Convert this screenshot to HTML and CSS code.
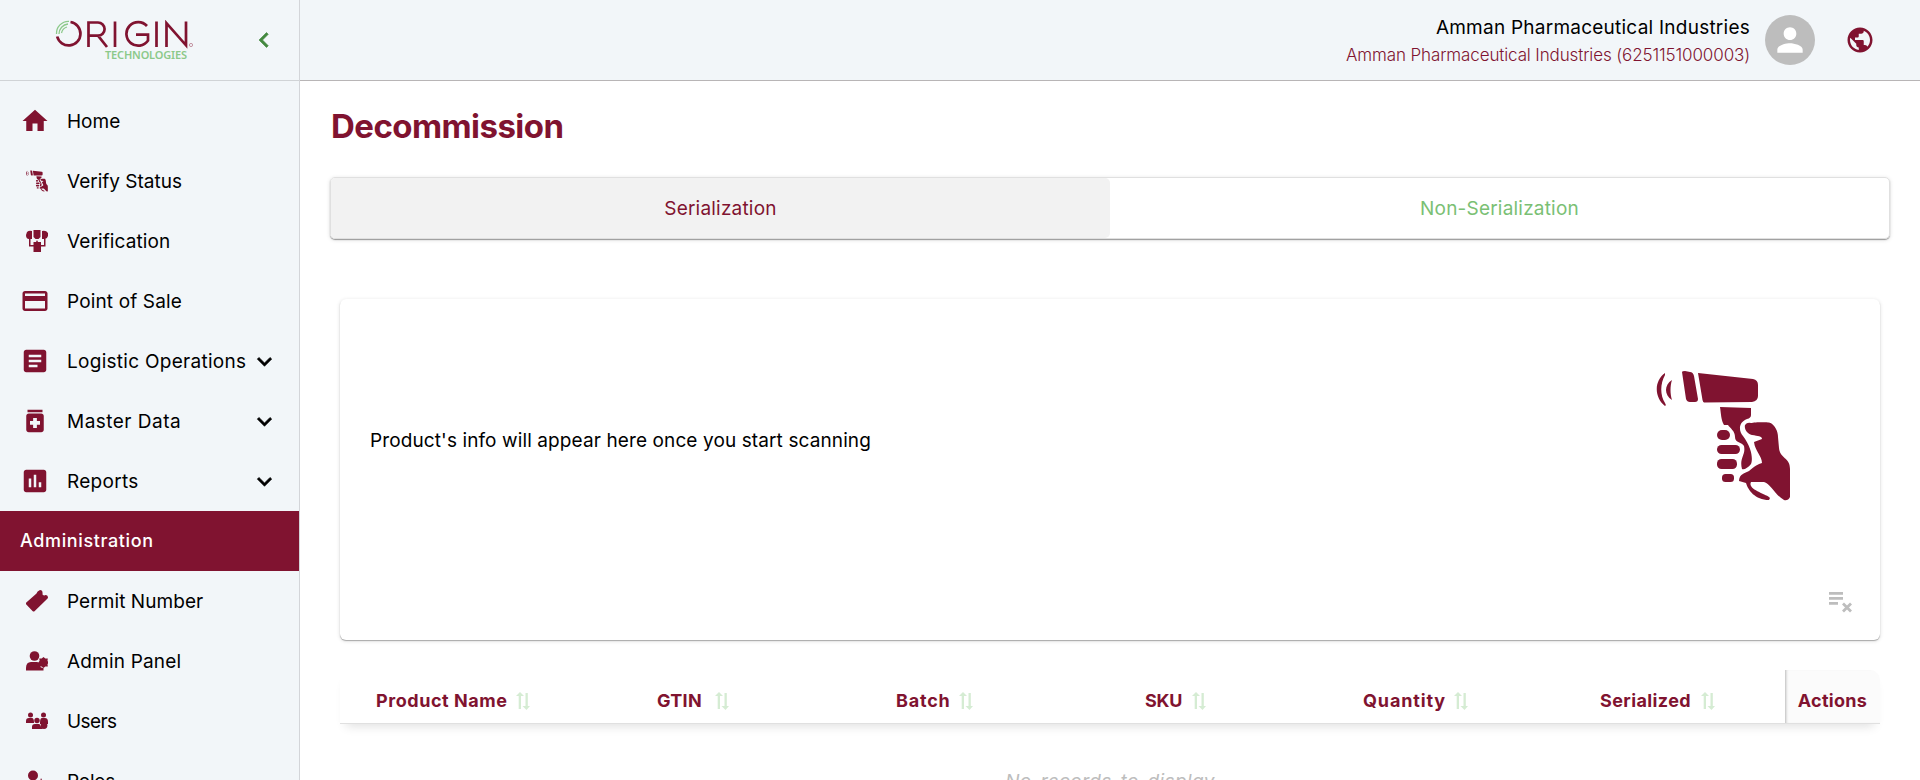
FILE: index.html
```html
<!DOCTYPE html>
<html lang="en">
<head>
<meta charset="utf-8">
<title>Decommission</title>
<link rel="stylesheet" href="styles.css">
</head>
<body>
<svg width="0" height="0" class="defs">
  <symbol id="scanner" viewBox="0 0 135 130">
    <path d="M9 2C-2 10-2 26 9 35C10 34 10 34 9 32C4 24 4 13 9 4ZM16 9C8 14 8 24 16 29C14 23 14 15 16 9ZM26 1Q26 0 29 0L34 1Q37 1 38 5L42 28Q42 31 39 31H34Q31 31 30 28ZM42 2L97 8Q102 9 102 14V25Q102 30 96 31L48 31.500Q47 31 46.500 29ZM64 36L95 37V44Q95 47 91 48C83 51 82 59 87 65C96 77 97 88 95 93C92 97 88 99 86 98C83 87 90 84 88 75C86 71 79 72 79 66C79 60 74 57 72 54H68C65 49 65 42 64 36ZM95 52C98 51 111 51 113 51.500C119 53 122 61 122 66L123 77C124 88 134 86 134 98V126Q132 130 128 129C119 124 114 112 108 111H95C91 119 111 123 114 127L113 129C99 129 92 119 90 112L83 110C83 103 89 102 93 100C99 95 102 93 106 92C106 85 99 80 98 71L106 68C106 65 102 65 96 64C91 63 88 58 89 54Q91 51 95 52Z"/>
    <rect x="61" y="59" width="13" height="10" rx="5"/><rect x="61" y="74" width="23" height="9" rx="4.500"/><rect x="61" y="88" width="20" height="10" rx="4.500"/><rect x="66" y="103" width="12" height="8" rx="3.500"/>
  </symbol>
  <symbol id="down" viewBox="0 0 24 24"><path d="M7.410 8.590 12 13.170l4.590-4.580L18 10l-6 6-6-6z"/></symbol>
  <symbol id="sort" viewBox="0 0 14 18"><path d="M2.700 17V4H0L4 0l4 4H5v13zM9.500 1v13H6.500L10.500 18l3.500-4h-2.200V1z"/></symbol>
</svg>
<div class="app">
  <aside class="sidebar">
    <div class="brand">
      <svg class="logo" viewBox="0 0 140 42" width="140" height="42">
        <g fill="none" stroke="#801330" stroke-width="2.700">
          <path d="M15.500 2A11.800 11.800 0 1 1 2.200 16.500"/>
          <path d="M33.500 27V2.500h9.500a6.600 6.600 0 0 1 0 13.200h-9.500M43 15.700 52 27M60 1.500V27M92 6A11.800 11.800 0 1 0 93 20.500V14.700H81M101.500 1.500V27M111.500 27V3.200L131 25.300V1.500"/>
        </g>
        <g fill="none" stroke="#8cc98a" stroke-width="1.300"><path d="M1.500 14A12 12 0 0 1 14 1.300M4 14A10 10 0 0 1 13 4M6.500 13A8 8 0 0 1 12 7"/></g>
        <text class="tech" x="50" y="38.500" textLength="82">TECHNOLOGIES</text>
        <circle cx="136" cy="25" r="1.600" fill="none" stroke="#b77a8b" stroke-width=".8"/>
      </svg>
      <svg class="collapse" viewBox="0 0 24 24"><path d="M15.410 7.410 14 6l-6 6 6 6 1.410-1.410L10.830 12z"/></svg>
    </div>
    <nav class="nav">
      <a class="item"><svg class="ico" viewBox="0 0 24 24"><path d="M10 20v-6h4v6h5v-8h3L12 3 2 12h3v8z"/></svg><span class="w-home">Home</span></a>
      <a class="item"><svg class="ico small"><use href="#scanner"/></svg><span class="w-verify">Verify Status</span></a>
      <a class="item"><svg class="ico small" viewBox="0 0 22 22"><path d="M1 2Q3 0 6 1V9H3Q0 9 0 5ZM7.500 0H14.500V7L12.500 9H9.500L7.500 7ZM16 1Q20 0 22 3V6Q21 9 19 9H16ZM7.500 12H10L11 10L12 12H15V22H7.500ZM3 9H4.500V15H8V16.500H3ZM18 9H19.500V16.500H15V15H18Z"/></svg><span class="w-verification">Verification</span></a>
      <a class="item"><svg class="ico" viewBox="0 0 24 24"><path d="M20 4H4c-1.110 0-1.990.890-1.990 2L2 18c0 1.110.890 2 2 2h16c1.110 0 2-.890 2-2V6c0-1.110-.890-2-2-2zm0 14H4v-6h16v6zm0-10H4V6h16v2z"/></svg><span class="w-pos">Point of Sale</span></a>
      <a class="item"><svg class="ico" viewBox="0 0 24 24"><path d="M19 3H5c-1.100 0-2 .9-2 2v14c0 1.100.9 2 2 2h14c1.100 0 2-.9 2-2V5c0-1.100-.9-2-2-2zm-5 14H7v-2h7v2zm3-4H7v-2h10v2zm0-4H7V7h10v2z"/></svg><span class="w-log">Logistic Operations</span><svg class="chev"><use href="#down"/></svg></a>
      <a class="item"><svg class="ico" viewBox="0 0 24 24"><path d="M6 3h12v2H6zm11 3H7c-1.100 0-2 .9-2 2v11c0 1.100.9 2 2 2h10c1.100 0 2-.9 2-2V8c0-1.100-.9-2-2-2zm-1 9h-2.500v2.500h-3V15H8v-3h2.500V9.500h3V12H16z"/></svg><span class="w-master">Master Data</span><svg class="chev"><use href="#down"/></svg></a>
      <a class="item"><svg class="ico" viewBox="0 0 24 24"><path d="M19 3H5c-1.100 0-2 .9-2 2v14c0 1.100.9 2 2 2h14c1.100 0 2-.9 2-2V5c0-1.100-.9-2-2-2zM9 17H7v-7h2v7zm4 0h-2V7h2v10zm4 0h-2v-4h2v4z"/></svg><span class="w-reports">Reports</span><svg class="chev"><use href="#down"/></svg></a>
      <div class="section"><span class="w-administration">Administration</span></div>
      <a class="item"><svg class="ico small" viewBox="0 0 22 22"><path d="M.3 12.500 10.500 3.500Q11 1 14 0Q17 0 16.500 4.500Q18 6 19.500 5Q22 5 22 8L19 11L8.500 21.300Q7.500 22 6.500 21L.3 14.500Q-.5 13.500.3 12.500Z"/></svg><span class="w-permit">Permit Number</span></a>
      <a class="item"><svg class="ico small" viewBox="0 0 22 22"><circle cx="8.500" cy="6" r="4.800"/><path d="M0 20.500V18Q0 12 5 12H11Q13 12 14 14Q13 18 17.500 18V20.500ZM17.500 7 19.300 8.500 21.800 8.500 21.500 10.800 22.500 12.500 21.500 14.300 21.800 16.500 19.300 16.500 17.500 18 15.700 16.500 13.300 16.500 13.600 14.300 12.500 12.500 13.600 10.800 13.300 8.500 15.700 8.500Z"/></svg><span class="w-admin">Admin Panel</span></a>
      <a class="item"><svg class="ico small" viewBox="0 0 22 22"><circle cx="4.500" cy="5" r="2.500"/><circle cx="17.500" cy="5" r="2.500"/><circle cx="11" cy="10.500" r="2.700"/><path d="M0 13V11Q0 8 3 8H6Q8 8 8 13ZM14 13Q14 8 16 8H19Q22 8 22 12V14H14ZM6 19V17Q6 14 9 14H13Q14 14 14.500 16L17 19Z"/><circle cx="18" cy="15.500" r="3.400"/></svg><span class="w-users">Users</span></a>
      <a class="item"><svg class="ico small" viewBox="0 0 22 22"><circle cx="7" cy="5.500" r="5"/><path d="M0 22Q0 12 7 12Q11 12 13 15L15 8L19 16V22Z"/></svg><span class="w-roles">Roles</span></a>
    </nav>
  </aside>
  <div class="page">
    <header class="topbar">
      <div class="account"><div class="name"><span>Amman Pharmaceutical Industries</span></div><div class="org"><span>Amman Pharmaceutical Industries (6251151000003)</span></div></div>
      <div class="avatar"><svg viewBox="0 0 24 24"><path d="M12 12c2.210 0 4-1.790 4-4s-1.790-4-4-4-4 1.790-4 4 1.790 4 4 4zm0 2c-2.670 0-8 1.340-8 4v2h16v-2c0-2.660-5.330-4-8-4z"/></svg></div>
      <svg class="globe" viewBox="0 0 24 24"><path d="M12 2C6.480 2 2 6.480 2 12s4.480 10 10 10 10-4.480 10-10S17.520 2 12 2zm-1 17.930c-3.950-.490-7-3.850-7-7.930 0-.620.080-1.210.210-1.790L9 15v1c0 1.100.9 2 2 2v1.930zm6.900-2.540c-.260-.810-1-1.390-1.900-1.390h-1v-3c0-.550-.450-1-1-1H8v-2h2c.550 0 1-.450 1-1V7h2c1.100 0 2-.9 2-2v-.410c2.930 1.190 5 4.060 5 7.410 0 2.080-.8 3.970-2.100 5.390z"/></svg>
    </header>
    <main class="main">
      <h1 class="title"><span>Decommission</span></h1>
      <div class="tabs"><div class="tab active"><span>Serialization</span></div><div class="tab"><span class="non">Non-Serialization</span></div></div>
      <section class="card">
        <p class="hint"><span>Product's info will appear here once you start scanning</span></p>
        <div class="art"><svg class="gun" width="135" height="130"><use href="#scanner"/></svg>
          <svg class="clear" viewBox="0 0 24 21" width="24" height="21"><path d="M0 0H14V2.700H0ZM0 5H14V7.700H0ZM0 10H9V12.700H0Z"/><path d="M14 11.500 22 19.500M22 11.500 14 19.500" fill="none" stroke="#bdbdbd" stroke-width="2.800"/></svg></div>
      </section>
      <div class="table">
        <div class="thead">
          <div class="th c1"><span>Product Name</span><svg class="sort"><use href="#sort"/></svg></div>
          <div class="th c2"><span>GTIN</span><svg class="sort"><use href="#sort"/></svg></div>
          <div class="th c3"><span>Batch</span><svg class="sort"><use href="#sort"/></svg></div>
          <div class="th c4"><span>SKU</span><svg class="sort"><use href="#sort"/></svg></div>
          <div class="th c5"><span>Quantity</span><svg class="sort"><use href="#sort"/></svg></div>
          <div class="th c6"><span>Serialized</span><svg class="sort"><use href="#sort"/></svg></div>
          <div class="th actions"><span>Actions</span></div>
        </div>
        <div class="empty"><span>No records to display</span></div>
      </div>
    </main>
  </div>
</div>
</body>
</html>
```
FILE: styles.css
```css
*{box-sizing:border-box}
body{margin:0;height:780px;overflow:hidden;background:#fff;color:#000;font:19px/24px Inter,"Noto Sans",sans-serif}
.defs{display:block;width:0;height:0}
svg{display:block;flex:none}
span{white-space:nowrap}
.app{display:flex;height:780px;overflow:hidden}
.sidebar{width:300px;flex:none;background:#f2f6f9;border-right:1px solid #d3d5d9}
.brand{height:81px;display:flex;align-items:center;border-bottom:1px solid #d0d3d6;padding-left:55px}
.logo{margin-top:2px}
.tech{font:600 11px "Noto Sans",sans-serif;fill:#8cc98a}
.collapse{width:30px;height:30px;margin-left:54px;fill:#43883f;stroke:#43883f;stroke-width:.5}
.nav{padding-top:10px}
.item{display:flex;align-items:center;height:60px;padding-left:20px}
.ico{width:30px;height:30px;fill:#801330;margin-right:17px}
.ico.small{width:22px;height:22px;margin:0 19px 0 6px}
.item span{flex:1;padding-top:2px}
.w-verification{letter-spacing:.1px}
.w-pos{letter-spacing:.14px}
.w-log{letter-spacing:.28px}
.w-master{letter-spacing:.48px}
.w-reports{letter-spacing:.28px}
.w-administration{letter-spacing:.63px}
.w-permit{letter-spacing:.07px}
.w-admin{letter-spacing:.18px}
.w-users{letter-spacing:-.6px}
.w-roles{letter-spacing:-.2px}
.chev{width:29px;height:29px;margin-right:20px;stroke:#000;stroke-width:.5}
.section{height:60px;background:#801330;color:#fff;display:flex;align-items:center;padding-left:20px;font-weight:500;font-size:18px}
.page{flex:1;min-width:0}
.topbar{height:81px;background:#f2f6f9;border-bottom:1px solid #b8b5b6;display:flex;align-items:center;justify-content:flex-end;padding-right:45px}
.account{text-align:right;margin-right:15px;padding-top:3px}
.name{line-height:28px;letter-spacing:.24px}
.org{font-size:17px;font-weight:300;color:#801330;line-height:27px;letter-spacing:-.12px}
.avatar{width:50px;height:50px;border-radius:50%;background:#bdbdbd;display:flex;align-items:center;justify-content:center}
.avatar svg{width:38px;height:38px;fill:#fff}
.globe{width:30px;height:30px;fill:#801330;margin-left:30px}
.main{padding:24px 30px 0}
.title{margin:0;height:72px;padding-left:1px;font-size:33px;line-height:42px;font-weight:700;color:#801330;letter-spacing:-.55px}
.tabs{height:62px;display:flex;border:1px solid #e0e0e0;border-radius:5px;box-shadow:0 1px 1px #999,0 1px 4px #0002;overflow:hidden}
.tab{flex:1;display:flex;align-items:center;justify-content:center;color:#7ac074;letter-spacing:.2px;padding-top:2px}
.active{background:#f2f2f2;color:#801330;border-radius:0 5px 5px 0}
.card{height:341px;margin:60px 10px 0;border-radius:6px;box-shadow:0 1px 1px #aaa,0 1px 4px #0002;display:flex;padding:0 27px 0 30px}
.hint{flex:1;margin:130px 0 0;letter-spacing:.11px}
.art{display:flex;flex-direction:column;align-items:flex-end;padding-top:72px}
.gun{fill:#801330;margin-right:62px}
.clear{fill:#bdbdbd;margin-top:91px}
.table{margin:30px 10px 0}
.thead{display:flex;height:54px;border-bottom:1px solid #e0e0e0;box-shadow:0 8px 10px -6px #0002;color:#801330;font-weight:700;font-size:18px}
.th{display:flex;align-items:center;padding-top:8px}
.sort{width:14px;height:18px;fill:#d5ecd3;margin-left:8px}
.c1{width:281px;padding-left:36px;letter-spacing:.55px}
.c2{width:239px;padding-left:36px;letter-spacing:.3px}
.c2 .sort{margin-left:13px}
.c3{width:249px;padding-left:36px;letter-spacing:.8px}
.c4{width:218px;padding-left:36px;letter-spacing:-.3px}
.c4 .sort,.c6 .sort{margin-left:10px}
.c5{width:237px;padding-left:36px;letter-spacing:.85px}
.c6{flex:1;padding-left:36px;letter-spacing:.4px}
.actions{width:95px;background:#fbfbfb;box-shadow:inset 3px 0 3px -2px #0004;border-radius:0 10px 0 0;justify-content:center;letter-spacing:.3px}
.empty{height:120px;padding-top:46px;text-align:center;font-style:italic;color:#bdbdbd;letter-spacing:.4px;word-spacing:3px}
```
